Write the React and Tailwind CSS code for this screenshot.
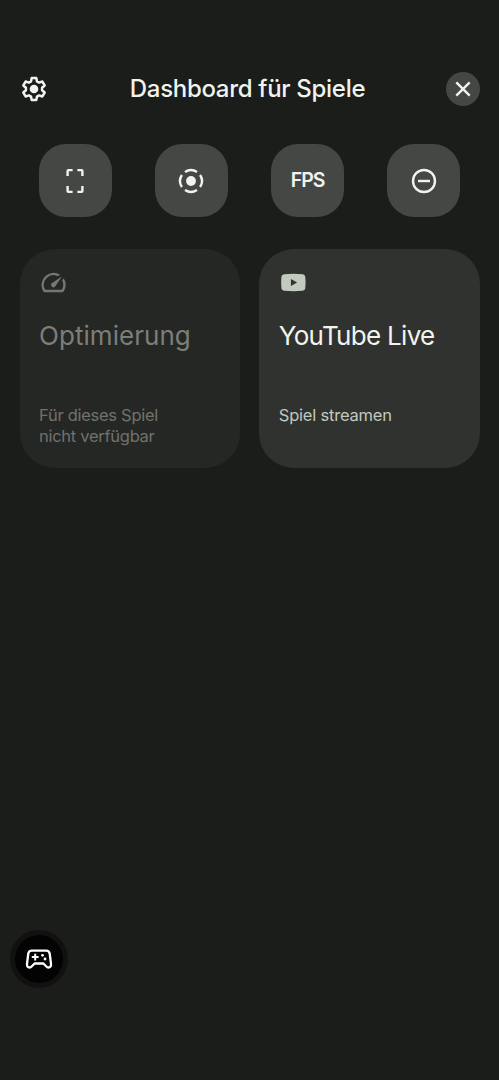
import { MdSpeed } from "react-icons/md";

function SettingsIcon() {
  return (
    <svg className="h-[30px] w-[30px]" viewBox="-15 -15 30 30" fill="none">
      <path
        d="M-3-7.6-2.3-11H2.3L3-7.6 5.08-6.4 8.38-7.49 10.68-3.51 8.08-1.2V1.2L10.68 3.51 8.38 7.49 5.08 6.4 3 7.6 2.3 11H-2.3L-3 7.6-5.08 6.4-8.38 7.49-10.68 3.51-8.08 1.2V-1.2L-10.68-3.51-8.38-7.49-5.08-6.4Z"
        stroke="currentColor"
        strokeWidth="2.5"
        strokeLinejoin="round"
      />
      <circle r="4.3" fill="currentColor" />
    </svg>
  );
}

function CloseIcon() {
  return (
    <svg className="h-5 w-5" viewBox="-10 -10 20 20" fill="none">
      <path d="M-6.7-6.7 6.7 6.7M6.7-6.7-6.7 6.7" stroke="currentColor" strokeWidth="2.4" />
    </svg>
  );
}

function ScreenshotIcon() {
  return (
    <svg className="h-[30px] w-[30px]" viewBox="-15 -15 30 30" fill="none">
      <path
        d="M-7.4-5V-10.1Q-7.4-10.9-6.6-10.9H-2.4M2.4-10.9H6.6Q7.4-10.9 7.4-10.1V-5M7.4 5V10.1Q7.4 10.9 6.6 10.9H2.4M-2.4 10.9H-6.6Q-7.4 10.9-7.4 10.1V5"
        stroke="currentColor"
        strokeWidth="2.4"
      />
    </svg>
  );
}

function RecordIcon() {
  return (
    <svg className="h-[30px] w-[30px]" viewBox="-15 -15 30 30" fill="none">
      <path
        d="M-6-9.1A10.9 10.9 0 0 1 6-9.1M9.1-6A10.9 10.9 0 0 1 9.1 6M6 9.1A10.9 10.9 0 0 1-6 9.1M-9.1 6A10.9 10.9 0 0 1-9.1-6"
        stroke="currentColor"
        strokeWidth="2.4"
      />
      <circle r="4.9" fill="currentColor" />
    </svg>
  );
}

function DoNotDisturbIcon() {
  return (
    <svg className="h-[30px] w-[30px]" viewBox="-15 -15 30 30" fill="none">
      <circle r="11" stroke="currentColor" strokeWidth="2.4" />
      <path d="M-6 0H6" stroke="currentColor" strokeWidth="2.4" />
    </svg>
  );
}

function YouTubeIcon() {
  return (
    <svg className="h-[29px] w-[29px]" viewBox="0 0 29 29">
      <path
        fill="currentColor"
        fillRule="evenodd"
        d="M5.3 6.2Q14.3 5.3 23.6 6.2Q26 6.4 26.3 8.8Q26.9 14.5 26.3 20.2Q26 22.6 23.6 22.8Q14.3 23.7 5.3 22.8Q2.7 22.6 2.4 20.2Q1.8 14.5 2.4 8.8Q2.7 6.4 5.3 6.2ZM11.9 11V18L18.1 14.5Z"
      />
    </svg>
  );
}

function GamepadIcon() {
  return (
    <svg className="h-[30px] w-[30px] shrink-0" viewBox="-15 -15 30 30" fill="none">
      <path
        d="M-7.3-8.4H7.3Q10.1-8.4 10.7-5.5L12 4.8Q12.3 8.5 9.3 8.5Q8.3 8.5 7.4 7.5L4.4 4.5H-4.4L-7.4 7.5Q-8.3 8.5-9.3 8.5Q-12.3 8.5-12 4.8L-10.7-5.5Q-10.1-8.4-7.3-8.4Z"
        stroke="currentColor"
        strokeWidth="2.3"
        strokeLinejoin="round"
      />
      <path d="M-7.2-1.9H-0.4M-3.8-5.3V1.5" stroke="currentColor" strokeWidth="2" />
      <circle cx="3.5" cy="-3.7" r="1.4" fill="currentColor" />
      <circle cx="6" cy="0" r="1.4" fill="currentColor" />
    </svg>
  );
}

const tiles = [
  { label: "Screenshot", content: <ScreenshotIcon /> },
  { label: "Aufnahme", content: <RecordIcon /> },
  { label: "FPS", content: <span className="pt-px text-[19.5px] font-semibold tracking-[-1px]">FPS</span> },
  { label: "Nicht stören", content: <DoNotDisturbIcon /> },
];

export default function App() {
  return (
    <div className="flex h-[1080px] w-[499px] flex-col bg-[#1b1d1a] font-['Inter',sans-serif] text-[#f1f3ee]">
      <header className="mt-[71px] flex h-[35px] items-center justify-between px-[19px]">
        <button aria-label="Einstellungen">
          <SettingsIcon />
        </button>
        <h1 className="text-[24px] leading-8 font-medium tracking-[-0.3px] whitespace-nowrap">Dashboard für Spiele</h1>
        <button aria-label="Schließen" className="flex h-[34px] w-[34px] items-center justify-center rounded-full bg-[#454744]">
          <CloseIcon />
        </button>
      </header>

      <div className="mt-[38px] flex justify-between px-[38.5px]">
        {tiles.map((tile) => (
          <button
            key={tile.label}
            aria-label={tile.label}
            className="flex h-[73px] w-[73px] items-center justify-center rounded-[27px] bg-[#454744]"
          >
            {tile.content}
          </button>
        ))}
      </div>

      <div className="mt-[31.5px] grid grid-cols-2 gap-[19.5px] px-[19.5px]">
        <div className="flex h-[219.5px] flex-col rounded-[35px] bg-[#252724] px-[19.5px] pt-[19.5px] text-[#7c7e7a]">
          <MdSpeed className="h-[29px] w-[29px] text-[#757773]" />
          <h2 className="mt-[21px] text-[26px] leading-[36px] tracking-[0.05px] whitespace-nowrap">Optimierung</h2>
          <p className="mt-[51px] text-[16.5px] leading-[21px] tracking-[-0.28px] text-[#70726e]">
            Für dieses Spiel
            <br />
            nicht verfügbar
          </p>
        </div>
        <div className="flex h-[219.5px] flex-col rounded-[35px] bg-[#30322f] px-[19.5px] pt-[19.5px]">
          <span className="text-[#c2cac0]">
            <YouTubeIcon />
          </span>
          <h2 className="mt-[21px] text-[26px] leading-[36px] tracking-[-0.7px] whitespace-nowrap">YouTube Live</h2>
          <p className="mt-[51px] text-[16.5px] leading-[21px] tracking-[-0.2px] text-[#c2c8bf]">Spiel streamen</p>
        </div>
      </div>

      <button
        aria-label="Spiele"
        className="mt-auto mb-[92px] ml-[9.5px] flex h-[58px] w-[58px] items-center justify-center rounded-full border-[5px] border-[#111210] bg-[#030303] text-white"
      >
        <GamepadIcon />
      </button>
    </div>
  );
}
